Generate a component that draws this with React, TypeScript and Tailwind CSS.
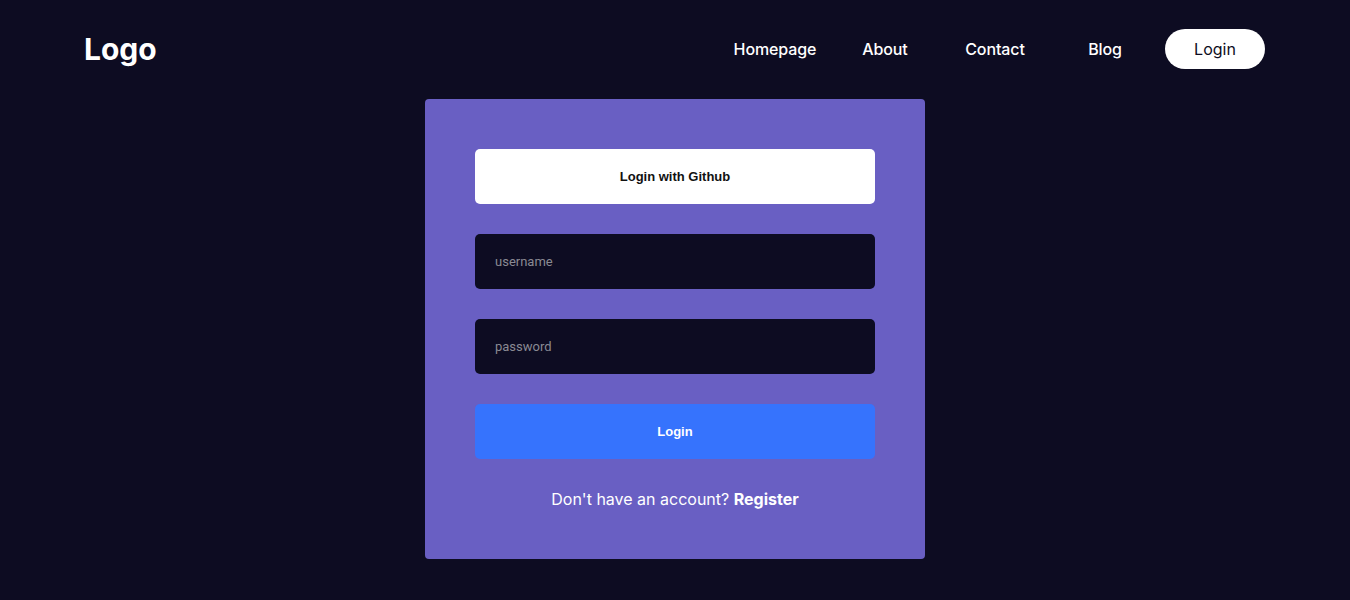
export default function App() {
  const links = ['Homepage', 'About', 'Contact', 'Blog'];
  return (
    <div className="min-h-[600px] bg-[#0d0c22] text-white font-['Inter',sans-serif]">
      <header className="flex h-[98px] items-center justify-between pl-[84px] pr-[85px]">
        <div className="text-[30px] font-bold leading-none">Logo</div>
        <nav className="flex items-center gap-[10px]">
          {links.map((l) => (
            <a key={l} href="#" className="w-[100px] text-center text-base font-medium tracking-[-0.1px]">
              {l}
            </a>
          ))}
          <button className="h-10 w-[100px] rounded-full bg-white text-base text-[#0d0c22]">Login</button>
        </nav>
      </header>

      <main className="flex justify-center pt-px">
        <div className="flex w-[500px] flex-col gap-[30px] rounded bg-[#695fc3] p-[50px]">
          <button className="h-[55px] w-full rounded-[5px] bg-white font-['Liberation_Sans',Arial,sans-serif] text-[13px] font-bold text-[#111]">
            Login with Github
          </button>
          <input
            type="text"
            placeholder="username"
            className="h-[55px] w-full rounded-[5px] bg-[#0d0c22] px-5 font-['Roboto',sans-serif] text-[13px] text-white outline-none placeholder:text-[#8a8a93]"
          />
          <input
            type="password"
            placeholder="password"
            className="h-[55px] w-full rounded-[5px] bg-[#0d0c22] px-5 font-['Roboto',sans-serif] text-[13px] text-white outline-none placeholder:text-[#8a8a93]"
          />
          <button className="h-[55px] w-full rounded-[5px] bg-[#3673fd] font-['Liberation_Sans',Arial,sans-serif] text-[13px] font-bold text-white">
            Login
          </button>
          <p className="text-center text-base leading-5">
            Don't have an account? <b className="font-bold">Register</b>
          </p>
        </div>
      </main>
    </div>
  );
}
